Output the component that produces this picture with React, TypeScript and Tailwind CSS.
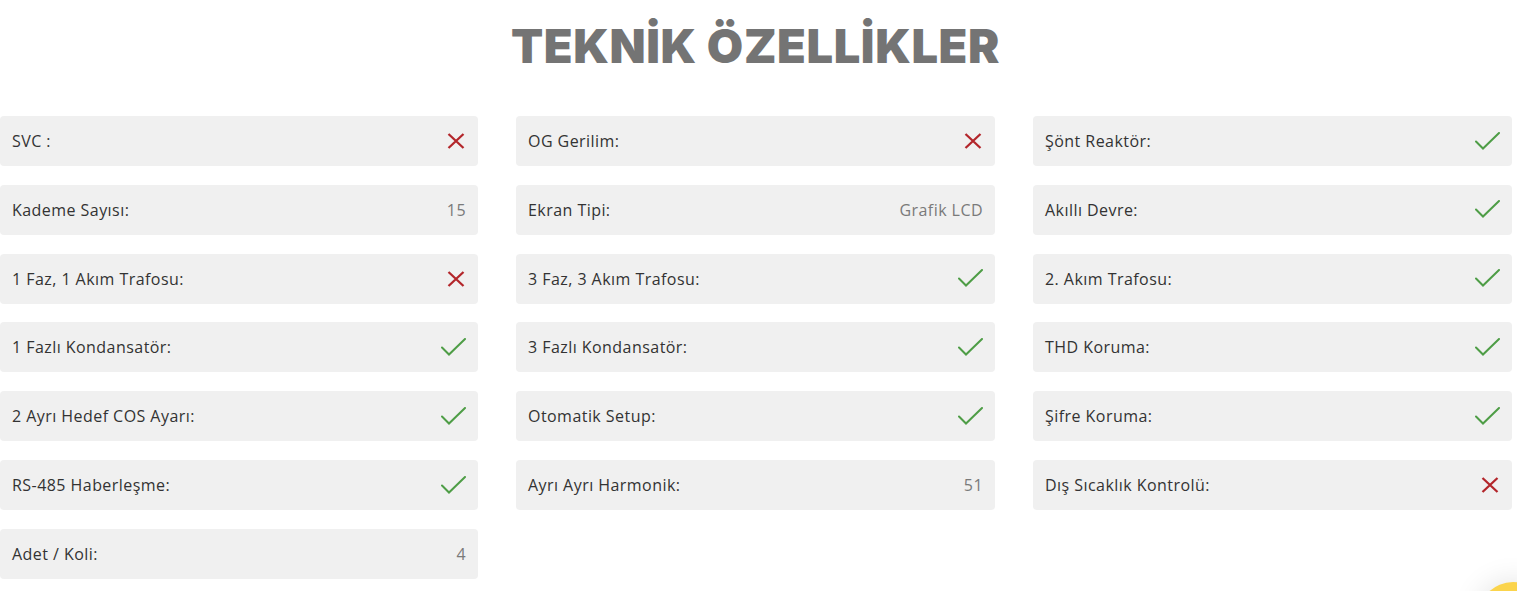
import React from "react";

type V = { t: "x" } | { t: "c" } | { t: "s"; v: string };

const cols: [string, V][][] = [
  [
    ["SVC :", { t: "x" }],
    ["Kademe Sayısı:", { t: "s", v: "15" }],
    ["1 Faz, 1 Akım Trafosu:", { t: "x" }],
    ["1 Fazlı Kondansatör:", { t: "c" }],
    ["2 Ayrı Hedef COS Ayarı:", { t: "c" }],
    ["RS-485 Haberleşme:", { t: "c" }],
    ["Adet / Koli:", { t: "s", v: "4" }],
  ],
  [
    ["OG Gerilim:", { t: "x" }],
    ["Ekran Tipi:", { t: "s", v: "Grafik LCD" }],
    ["3 Faz, 3 Akım Trafosu:", { t: "c" }],
    ["3 Fazlı Kondansatör:", { t: "c" }],
    ["Otomatik Setup:", { t: "c" }],
    ["Ayrı Ayrı Harmonik:", { t: "s", v: "51" }],
  ],
  [
    ["Şönt Reaktör:", { t: "c" }],
    ["Akıllı Devre:", { t: "c" }],
    ["2. Akım Trafosu:", { t: "c" }],
    ["THD Koruma:", { t: "c" }],
    ["Şifre Koruma:", { t: "c" }],
    ["Dış Sıcaklık Kontrolü:", { t: "x" }],
  ],
];

function Cross() {
  return (
    <svg width="18" height="16" viewBox="0 0 18 16" className="mr-[1px]">
      <path d="M1.5 1 L16.5 15 M16.5 1 L1.5 15" stroke="#b3262b" strokeWidth="2.3" fill="none" />
    </svg>
  );
}

function Check() {
  return (
    <svg width="25" height="19" viewBox="0 0 25 19">
      <path d="M1 9.5 L8 16.5 L24 1" stroke="#4e9d46" strokeWidth="2" fill="none" strokeLinecap="round" strokeLinejoin="miter" />
    </svg>
  );
}

function Row({ label, v }: { label: string; v: V }) {
  return (
    <div className="h-[50px] bg-[#f0f0f0] rounded-[4px] flex items-center justify-between pl-[12px] pr-[12px]">
      <span className="text-[16px] text-[#333333] tracking-[0.45px]">{label}</span>
      {v.t === "x" ? <Cross /> : v.t === "c" ? <Check /> : <span className="text-[16px] text-[#7a7a7a] tracking-[0.45px]">{v.v}</span>}
    </div>
  );
}

export default function App() {
  return (
    <div
      className="relative w-[1517px] h-[591px] overflow-hidden bg-white"
      style={{ fontFamily: '"Open Sans", "Noto Sans", sans-serif' }}
    >
      <h1
        className="pt-[16px] text-center text-[47px] leading-[60px] font-black text-[#747474] tracking-[0.6px] pr-[6px]"
        style={{ fontFamily: 'Inter, "Noto Sans", sans-serif' }}
      >
        TEKNİK ÖZELLİKLER
      </h1>
      <div className="mt-[40px] grid grid-cols-[478px_479px_479px] gap-x-[38px]">
        {cols.map((c, i) => (
          <div key={i} className="flex flex-col gap-y-[18.83px]">
            {c.map(([l, v]) => (
              <Row key={l} label={l} v={v} />
            ))}
          </div>
        ))}
      </div>
      <div className="absolute left-[1478px] top-[582px] w-[70px] h-[70px] rounded-full bg-[#fbd44c] shadow-[0_0_30px_rgba(0,0,0,0.12)]" />
    </div>
  );
}
